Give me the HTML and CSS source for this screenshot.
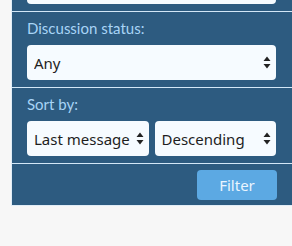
FILE: index.html
```html
<!DOCTYPE html>
<html lang="en">
<head>
    <meta charset="UTF-8">
    <title>Filter</title>
    <link rel="stylesheet" href="styles.css">
</head>
<body>
    <form class="filterPanel">
        <div class="filterRow">
            <span class="selectWrap">
                <select class="filterSelect"><option>Any</option></select>
                <svg class="selectArrow" width="8" height="13" viewBox="0 0 8 13"><path d="M4 0.5 L7.5 5 L0.5 5 Z M4 12.5 L7.5 8 L0.5 8 Z" fill="#222"/></svg>
            </span>
        </div>
        <div class="filterRow">
            <label class="filterLabel">Discussion status:</label>
            <span class="selectWrap">
                <select class="filterSelect"><option>Any</option></select>
                <svg class="selectArrow" width="8" height="13" viewBox="0 0 8 13"><path d="M4 0.5 L7.5 5 L0.5 5 Z M4 12.5 L7.5 8 L0.5 8 Z" fill="#222"/></svg>
            </span>
        </div>
        <div class="filterRow">
            <label class="filterLabel">Sort by:</label>
            <div class="selectPair">
                <span class="selectWrap">
                    <select class="filterSelect"><option>Last message</option></select>
                    <svg class="selectArrow" width="8" height="13" viewBox="0 0 8 13"><path d="M4 0.5 L7.5 5 L0.5 5 Z M4 12.5 L7.5 8 L0.5 8 Z" fill="#222"/></svg>
                </span>
                <span class="selectWrap">
                    <select class="filterSelect"><option>Descending</option></select>
                    <svg class="selectArrow" width="8" height="13" viewBox="0 0 8 13"><path d="M4 0.5 L7.5 5 L0.5 5 Z M4 12.5 L7.5 8 L0.5 8 Z" fill="#222"/></svg>
                </span>
            </div>
        </div>
        <div class="filterFooter">
            <button type="button" class="filterButton">Filter</button>
        </div>
    </form>
</body>
</html>
```

FILE: styles.css
```css
* { margin: 0; padding: 0; box-sizing: border-box; }

body {
    background-color: #f7f7f7;
    padding-left: 11px;
    font-family: "Noto Sans", "Open Sans", sans-serif;
    overflow: hidden;
}

/* 面板：页面已向下滚动，顶部选择框只露出一点 */
.filterPanel {
    margin-top: -31px;
    background-color: #2d5b80;
    border-left: 1px solid #e1edf7;
    border-bottom: 1px solid #e1edf7;
}

.filterRow {
    padding: 6px 16px 7px 15px;
    border-top: 1px solid #d3e7f7;
}
.filterRow:first-child { padding-top: 0; border-top: none; }

.filterLabel {
    display: block;
    font-family: Lato, "Noto Sans", sans-serif;
    font-size: 15px; line-height: 21px;
    color: #a8d4f6;
    margin-bottom: 6px;
}

.selectWrap { position: relative; display: block; flex: 1; }
.selectPair { display: flex; gap: 6px; }

.filterSelect {
    appearance: none; -webkit-appearance: none;
    display: block; width: 100%; height: 35px;
    padding: 0 18px 0 7px;
    border: none; border-radius: 4px;
    background-color: #f6fbff;
    font-family: inherit; font-size: 15px; color: #1e1e1e;
}

.selectArrow {
    position: absolute; right: 5px; top: 11px;
    pointer-events: none;
}

.filterFooter {
    display: flex; justify-content: flex-end;
    padding: 6px 15px 5px 15px;
    border-top: 1px solid #d3e7f7;
}

.filterButton {
    width: 80px; height: 30px;
    border: none; border-radius: 4px;
    background-color: #5ca9e3;
    color: #eaf5ff;
    font-family: inherit; font-size: 15px;
}
```
